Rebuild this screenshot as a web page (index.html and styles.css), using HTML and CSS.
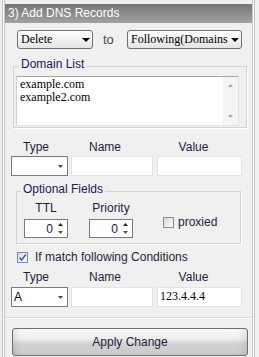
FILE: index.html
```html
<!DOCTYPE html>
<html>
<head>
<meta charset="utf-8">
<link rel="stylesheet" href="styles.css">
</head>
<body>
<div class="panel">
  <div class="title">3) Add DNS Records</div>
  <div class="row1">
    <div class="sel sel-action"><span>Delete</span><svg class="arr-big" width="8" height="4" viewBox="0 0 8 4"><polygon points="0,0 8,0 4,4" fill="#000"/></svg></div>
    <span class="to">to</span>
    <div class="sel sel-target"><span>Following(Domains</span><svg class="arr-big" width="8" height="4" viewBox="0 0 8 4"><polygon points="0,0 8,0 4,4" fill="#000"/></svg></div>
  </div>

  <fieldset class="group group-domain">
    <legend>Domain List</legend>
    <div class="textarea">
      <div class="ta-text">example.com<br>example2.com</div>
      <div class="scrollbar">
        <svg width="5" height="3" viewBox="0 0 5 3"><polygon points="0,3 5,3 2.5,0" fill="#a6a6a6"/></svg>
        <svg width="5" height="3" viewBox="0 0 5 3"><polygon points="0,0 5,0 2.5,3" fill="#a6a6a6"/></svg>
      </div>
    </div>
  </fieldset>

  <div class="labels labels-1">
    <span class="l-type">Type</span><span class="l-name">Name</span><span class="l-value">Value</span>
  </div>
  <div class="inputs">
    <div class="tsel"><span></span><svg width="5" height="3" viewBox="0 0 5 3"><polygon points="0,0 5,0 2.5,3" fill="#4a4a4a"/></svg></div>
    <div class="txt txt-name"></div>
    <div class="txt txt-value"></div>
  </div>

  <fieldset class="group group-opt">
    <legend>Optional Fields</legend>
    <div class="opt-row">
      <div class="spin-group sg-ttl">
        <span class="sg-label">TTL</span>
        <div class="spin"><span>0</span><span class="spin-arrows"><svg width="5" height="3" viewBox="0 0 5 3"><polygon points="0,3 5,3 2.5,0" fill="#222"/></svg><svg width="5" height="3" viewBox="0 0 5 3"><polygon points="0,0 5,0 2.5,3" fill="#555"/></svg></span></div>
      </div>
      <div class="spin-group sg-prio">
        <span class="sg-label">Priority</span>
        <div class="spin"><span>0</span><span class="spin-arrows"><svg width="5" height="3" viewBox="0 0 5 3"><polygon points="0,3 5,3 2.5,0" fill="#222"/></svg><svg width="5" height="3" viewBox="0 0 5 3"><polygon points="0,0 5,0 2.5,3" fill="#555"/></svg></span></div>
      </div>
      <div class="check check-proxied"><span class="box"></span><span class="check-text">proxied</span></div>
    </div>
  </fieldset>

  <div class="check check-match"><span class="box box-checked"><svg width="9" height="9" viewBox="0 0 9 9"><path d="M1.5 4.5 L3.6 7 L7.8 1.5" fill="none" stroke="#4b5aa6" stroke-width="1.6"/></svg></span><span class="check-text">If match following Conditions</span></div>

  <div class="labels labels-2">
    <span class="l-type">Type</span><span class="l-name">Name</span><span class="l-value">Value</span>
  </div>
  <div class="inputs inputs-2">
    <div class="tsel"><span>A</span><svg width="5" height="3" viewBox="0 0 5 3"><polygon points="0,0 5,0 2.5,3" fill="#4a4a4a"/></svg></div>
    <div class="txt txt-name"></div>
    <div class="txt txt-value">123.4.4.4</div>
  </div>

  <div class="sep"></div>
  <div class="btn">Apply Change</div>
</div>
</body>
</html>
```

FILE: styles.css
```css
* { box-sizing: border-box; }
html, body { margin: 0; padding: 0; }
body {
  background: #f0f0f0;
  font-family: "Liberation Sans", Arial, sans-serif;
  font-size: 12px;
  color: #1e1e3c;
  width: 259px;
  height: 357px;
  overflow: hidden;
}
.panel {
  margin-left: 2px;
  width: 253px;
  height: 357px;
  padding: 4px 2px 0 2px;
  border-left: 1px solid #c3c3c3;
  border-right: 1px solid #c3c3c3;
  box-shadow: inset 1px 0 #fff, inset 2px 0 #c8c8c8, inset -1px 0 #fff, inset -2px 0 #c8c8c8;
}
.title {
  height: 19px;
  line-height: 19px;
  padding-left: 3px;
  color: #fff;
  background: linear-gradient(#767676, #a2a2a2);
}
.row1 {
  display: flex;
  align-items: center;
  margin-top: 7px;
  height: 19px;
}
.sel {
  height: 19px;
  border: 1px solid #6e6e6e;
  border-radius: 3px;
  background: linear-gradient(#ffffff, #e4e4e4);
  display: flex;
  align-items: center;
  padding-left: 3px;
  font-family: "Liberation Serif", "Times New Roman", serif;
  font-size: 12px;
  color: #000;
  white-space: nowrap;
}
.sel .arr-big { margin-left: auto; flex: none; }
.sel-action { margin-left: 12px; width: 76px; }
.sel-action .arr-big { margin-right: 2px; }
.sel-target { margin-left: 10px; width: 115px; }
.sel-target .arr-big { margin-right: 2px; }
.to {
  width: 14px;
  margin-left: 10px;
  font-size: 13px;
  color: #4a4a4a;
}
.group {
  margin: 0;
  border: 1px solid #d3d3d3;
  box-shadow: 1px 1px 0 #fff;
  min-inline-size: 0;
}
.group legend {
  padding: 0 2px 4px 2px;
  line-height: 15px;
  font-size: 12px;
  color: #1a1a55;
}
.group-domain {
  margin: 8px 0 0 8px;
  width: 234px;
  padding: 0 2px 1px 2px;
}
.group-domain legend { margin-left: 3px; }
.textarea {
  width: 223px;
  height: 50px;
  border: 1px solid;
  border-color: #a8a8a8 #e2e2e2 #e6e6e6 #d2d2d2;
  background: #fff;
  display: flex;
}
.ta-text {
  flex: 1;
  padding: 1px 3px 0 3px;
  font-family: "Liberation Serif", "Times New Roman", serif;
  font-size: 12px;
  line-height: 13px;
  color: #000;
}
.scrollbar {
  width: 15px;
  background: #f4f4f4;
  display: flex;
  flex-direction: column;
  justify-content: space-between;
  align-items: center;
  padding: 7px 0 7px 0;
}
.scrollbar svg { display: block; }
.labels {
  display: flex;
  margin-left: 6px;
  line-height: 15px;
}
.labels-1 { margin-top: 12px; }
.labels-2 { margin-top: 5px; }
.labels span { text-align: center; }
.l-type { width: 57px; padding-right: 7px; }
.l-name { width: 82px; margin-left: 3px; padding-right: 14px; }
.l-value { width: 85px; margin-left: 4px; padding-right: 12px; }
.inputs {
  display: flex;
  margin-left: 6px;
  margin-top: 1px;
  height: 20px;
}
.inputs-2 { margin-top: 2px; }
.tsel {
  width: 57px;
  border: 1px solid #7a7a7a;
  background: #fff;
  display: flex;
  align-items: center;
  padding-left: 2px;
  color: #000;
}
.tsel svg { margin-left: auto; margin-right: 4px; }
.txt {
  border: 1px solid #e3e3e3;
  background: #fff;
  font-family: "Liberation Serif", "Times New Roman", serif;
  font-size: 12px;
  line-height: 14px;
  padding: 1px 2px;
  color: #000;
}
.txt-name { width: 82px; margin-left: 3px; }
.txt-value { width: 85px; margin-left: 4px; }
.group-opt {
  margin: 6px 0 0 11px;
  width: 225px;
  padding: 0 2px 5px 2px;
}
.group-opt legend { margin-left: 2px; }
.opt-row {
  display: flex;
  align-items: center;
}
.spin-group {
  display: flex;
  flex-direction: column;
  align-items: center;
  width: 44px;
}
.sg-ttl { margin-left: 5px; }
.sg-prio { margin-left: 21px; }
.sg-label { line-height: 15px; }
.spin {
  margin-top: 3px;
  width: 44px;
  height: 19px;
  border: 1px solid #7a7a7a;
  background: #fff;
  display: flex;
  align-items: center;
  justify-content: flex-end;
  padding-right: 4px;
  color: #1a1a3a;
}
.spin-arrows {
  display: flex;
  flex-direction: column;
  gap: 5px;
  margin-left: 5px;
}
.spin-arrows svg { display: block; }
.check {
  display: flex;
  align-items: center;
  line-height: 15px;
}
.box {
  width: 11px;
  height: 11px;
  border: 1px solid #8f8f8f;
  background: linear-gradient(135deg, #d8d8d8, #fdfdfd);
  display: flex;
  align-items: center;
  justify-content: center;
}
.box-checked { border-color: #7b86b0; background: linear-gradient(135deg, #dcdcdc, #fdfdfd); }
.check-proxied { margin-left: 30px; margin-top: 6px; }
.check-proxied .check-text { margin-left: 4px; }
.check-match { margin: 6px 0 0 12px; }
.check-match .check-text { margin-left: 7px; }
.sep {
  margin-top: 10px;
  height: 2px;
  border-top: 1px solid #d9d9d9;
  border-bottom: 1px solid #fff;
}
.btn {
  margin: 9px 0 0 7px;
  width: 236px;
  height: 28px;
  border: 1px solid #6e6e6e;
  border-radius: 3px;
  background: linear-gradient(#fbfbfb 0%, #ececec 40%, #d4d4d4 55%, #c9c9c9 100%);
  box-shadow: inset 8px 0 8px -6px rgba(0,0,0,0.12), inset -8px 0 8px -6px rgba(0,0,0,0.12);
  text-align: center;
  line-height: 26px;
  color: #1e1e3c;
}
```
